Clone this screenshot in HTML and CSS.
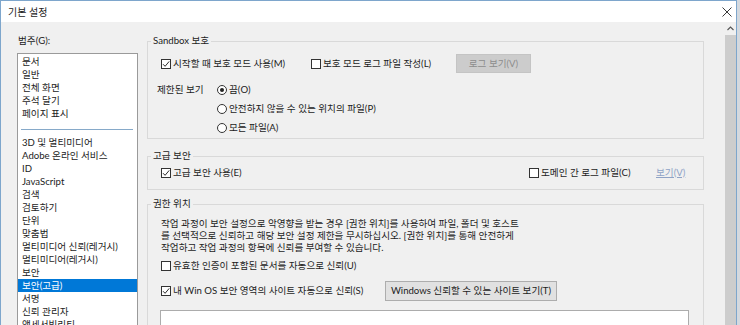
FILE: index.html
```html
<!DOCTYPE html>
<html lang="ko">
<head>
  <meta charset="UTF-8" />
  <meta name="viewport" content="width=device-width, initial-scale=1.0" />
  <title>기본 설정</title>
  <link rel="stylesheet" href="styles.css">
</head>
<body>
  <div class="dialog">
    <div class="titlebar">
      <span class="title">기본 설정</span>
      <svg class="close" width="10" height="10" viewBox="0 0 10 10"><path d="M0.5 0.5L9.5 9.5M9.5 0.5L0.5 9.5" stroke="#3a3a3a" stroke-width="1" fill="none"/></svg>
    </div>

    <div class="dialog-body">
      <div class="categories">
        <div class="cat-label">범주(G):</div>
        <ul class="listbox">
          <li>문서</li>
          <li>일반</li>
          <li>전체 화면</li>
          <li>주석 달기</li>
          <li>페이지 표시</li>
          <li class="sep"></li>
          <li>3D 및 멀티미디어</li>
          <li>Adobe 온라인 서비스</li>
          <li>ID</li>
          <li>JavaScript</li>
          <li>검색</li>
          <li>검토하기</li>
          <li>단위</li>
          <li>맞춤법</li>
          <li>멀티미디어 신뢰(레거시)</li>
          <li>멀티미디어(레거시)</li>
          <li>보안</li>
          <li class="selected">보안(고급)</li>
          <li>서명</li>
          <li>신뢰 관리자</li>
          <li>액세서빌리티</li>
        </ul>
      </div>

      <div class="pane">
        <div class="pane-content">
          <fieldset class="group group-sandbox">
            <legend>Sandbox 보호</legend>
            <div class="row indent">
              <label class="check w-start"><span class="box"><svg width="8" height="8" viewBox="0 0 8 8"><path d="M1 4.2L3.1 6.3L7.2 1.4" stroke="#2b2b2b" stroke-width="1" fill="none"/></svg></span>시작할 때 보호 모드 사용(M)</label>
              <label class="check w-log"><span class="box"></span>보호 모드 로그 파일 작성(L)</label>
              <button class="btn btn-disabled" disabled>로그 보기(V)</button>
            </div>
            <div class="restricted">
              <span class="restricted-label">제한된 보기</span>
              <div class="radios">
                <label class="radio"><span class="circle on"></span>끔(O)</label>
                <label class="radio"><span class="circle"></span>안전하지 않을 수 있는 위치의 파일(P)</label>
                <label class="radio"><span class="circle"></span>모든 파일(A)</label>
              </div>
            </div>
          </fieldset>

          <fieldset class="group group-enhanced">
            <legend>고급 보안</legend>
            <div class="row indent">
              <label class="check w-enhanced"><span class="box"><svg width="8" height="8" viewBox="0 0 8 8"><path d="M1 4.2L3.1 6.3L7.2 1.4" stroke="#2b2b2b" stroke-width="1" fill="none"/></svg></span>고급 보안 사용(E)</label>
              <label class="check w-domain"><span class="box"></span>도메인 간 로그 파일(C)</label>
              <a class="link">보기(V)</a>
            </div>
          </fieldset>

          <fieldset class="group group-privileged">
            <legend>권한 위치</legend>
            <p class="intro">
              작업 과정이 보안 설정으로 악영향을 받는 경우 [권한 위치]를 사용하여 파일, 폴더 및 호스트<br>
              를 선택적으로 신뢰하고 해당 보안 설정 제한을 무시하십시오. [권한 위치]를 통해 안전하게<br>
              작업하고 작업 과정의 항목에 신뢰를 부여할 수 있습니다.
            </p>
            <div class="row indent row-cert">
              <label class="check"><span class="box"></span>유효한 인증이 포함된 문서를 자동으로 신뢰(U)</label>
            </div>
            <div class="row indent row-winos">
              <label class="check w-winos"><span class="box"><svg width="8" height="8" viewBox="0 0 8 8"><path d="M1 4.2L3.1 6.3L7.2 1.4" stroke="#2b2b2b" stroke-width="1" fill="none"/></svg></span>내 Win OS 보안 영역의 사이트 자동으로 신뢰(S)</label>
              <button class="btn btn-sites">Windows 신뢰할 수 있는 사이트 보기(T)</button>
            </div>
            <div class="trust-list"></div>
          </fieldset>
        </div>

        <div class="scrollbar">
          <div class="sb-up"><svg width="7" height="5" viewBox="0 0 7 5"><path d="M0.5 4L3.5 1L6.5 4" stroke="#555" stroke-width="1.1" fill="none"/></svg></div>
          <div class="sb-thumb"></div>
        </div>
      </div>
    </div>
  </div>
</body>
</html>
```

FILE: styles.css
```css
* { margin: 0; padding: 0; box-sizing: border-box; }
body {
  font-family: "Lato", "Noto Sans CJK KR", sans-serif;
  font-size: 9.6px;
  line-height: 12px;
  color: #1c1c1c;
  background: #d4d9df;
  width: 740px;
  height: 325px;
  overflow: hidden;
}
.dialog {
  width: 737px;
  height: 325px;
  border: 1px solid #7ea6cc;
  border-bottom: none;
  background: #f0f0f0;
  display: flex;
  flex-direction: column;
  overflow: hidden;
}
.titlebar {
  height: 21px;
  flex: none;
  background: #fff;
  display: flex;
  align-items: center;
  justify-content: space-between;
  padding: 0 4px 0 7px;
  font-size: 10px;
}
.dialog-body {
  flex: 1;
  display: flex;
  min-height: 0;
}

/* category list */
.categories {
  width: 137px;
  flex: none;
  padding-left: 16px;
}
.cat-label {
  margin-top: 13px;
  height: 12px;
  padding-left: 1px;
  margin-bottom: 6px;
}
.listbox {
  list-style: none;
  width: 121px;
  background: #fff;
  border: 1px solid #9a9a9a;
}
.listbox li {
  height: 13px;
  line-height: 13px;
  padding-left: 4px;
  white-space: nowrap;
}
.listbox li:first-child { margin-top: 1px; }
.listbox li.sep {
  height: 1px;
  margin: 9px 4px 6px 3px;
  background: #86a9c9;
}
.listbox li.selected {
  background: #0078d7;
  color: #fff;
}

/* right pane */
.pane {
  flex: 1;
  display: flex;
  min-width: 0;
}
.pane-content {
  flex: 1;
  padding: 13px 21px 0 9px;
}
.scrollbar {
  width: 11px;
  flex: none;
  display: flex;
  flex-direction: column;
}
.sb-up {
  height: 13px;
  display: flex;
  align-items: center;
  justify-content: center;
}
.sb-thumb {
  flex: 1;
  background: #cdcdcd;
}

.group {
  border: 1px solid #d9d9d9;
  padding: 0 0 0 9px;
  min-width: 0;
}
.group legend {
  margin-left: -6px;
  padding: 0 2px;
  height: 12px;
}
.group-sandbox { padding-top: 7px; padding-bottom: 1px; }
.group-enhanced { margin-top: 11px; padding-top: 1px; padding-bottom: 7px; }
.group-privileged { margin-top: 8px; }

.row {
  display: flex;
  align-items: center;
  height: 19px;
}
.indent { padding-left: 4px; }

.check, .radio {
  display: flex;
  align-items: center;
  white-space: nowrap;
}
.box {
  width: 10px;
  height: 10px;
  border: 1px solid #333;
  background: #fff;
  margin-right: 2px;
  display: flex;
  align-items: center;
  justify-content: center;
  flex: none;
}
.w-start { width: 150px; }
.w-log { width: 145px; }
.w-enhanced { width: 368px; }
.w-domain { width: 127px; }
.w-winos { width: 224px; }

.btn {
  font: inherit;
  height: 19px;
  border: 1px solid #adadad;
  background: #e1e1e1;
  color: #1c1c1c;
}
.btn-disabled {
  width: 75px;
  background: #cccccc;
  border-color: #c4c4c4;
  color: #8d8d8d;
}
.btn-sites {
  width: 172px;
  height: 20px;
}

.restricted {
  display: flex;
  margin-top: 7px;
}
.restricted-label {
  width: 60px;
  height: 19px;
  line-height: 19px;
}
.radio { height: 19px; }
.circle {
  width: 10px;
  height: 10px;
  border: 1px solid #333;
  border-radius: 50%;
  background: #fff;
  margin-right: 2px;
  display: flex;
  align-items: center;
  justify-content: center;
}
.circle.on::after {
  content: "";
  width: 4px;
  height: 4px;
  border-radius: 50%;
  background: #222;
}

.link {
  color: #8fa3c6;
  text-decoration: underline;
}

.intro {
  margin-top: 8px;
  padding-left: 4px;
  line-height: 12px;
  white-space: nowrap;
}
.row-cert { margin-top: 2px; }
.row-winos { margin-top: 6px; height: 20px; }
.trust-list {
  margin: 9px 0 0 3px;
  width: 529px;
  height: 40px;
  background: #fff;
  border: 1px solid #acacac;
}
```
